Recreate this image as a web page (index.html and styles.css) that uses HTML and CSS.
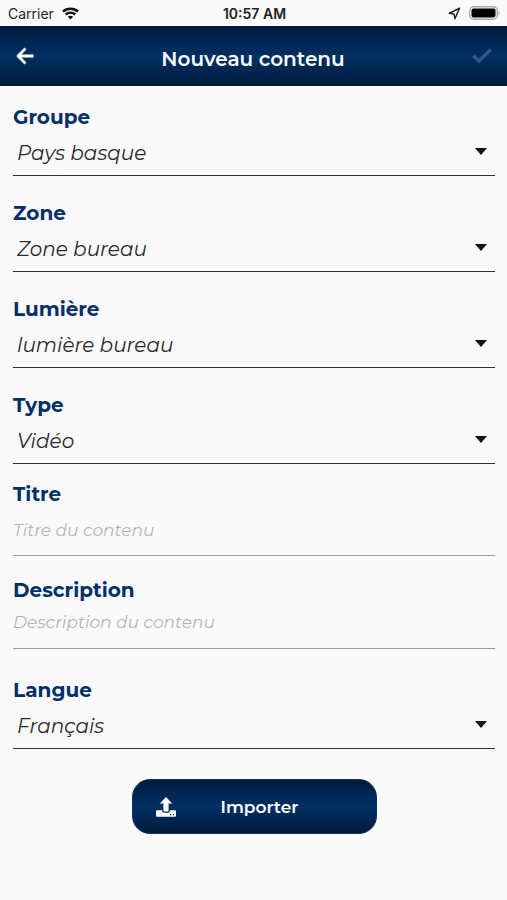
FILE: index.html
```html
<!DOCTYPE html>
<html lang="fr">
<head>
    <meta charset="UTF-8">
    <meta name="viewport" content="width=device-width, initial-scale=1.0">
    <title>Nouveau contenu</title>
    <link rel="stylesheet" href="styles.css">
</head>
<body>
    <div class="status-bar">
        <div class="status-left">
            <span>Carrier</span>
            <svg width="17" height="13" viewBox="0 0 17 13" fill="none" stroke="#111" stroke-width="2.4">
                <path d="M1 4.6C5 .7 12 .7 16 4.6"/>
                <path d="M3.7 7.5C6.4 5 10.6 5 13.3 7.5"/>
                <path d="M8.5 12.6L5.8 9.8C7.3 8.5 9.7 8.5 11.2 9.8Z" fill="#111" stroke="none"/>
            </svg>
        </div>
        <div class="status-time">10:57 AM</div>
        <div class="status-right">
            <svg width="13" height="13" viewBox="0 0 13 13" fill="none" stroke="#222" stroke-width="1.5" stroke-linejoin="round">
                <path d="M11.5 1.3L1.3 6.2L5.9 6.9L7 11.5Z"/>
            </svg>
            <svg width="32" height="14" viewBox="0 0 32 14">
                <rect x=".7" y=".7" width="27.6" height="12.6" rx="4" fill="none" stroke="#aaa" stroke-width="1.4"/>
                <rect x="2.5" y="2.5" width="24" height="9" rx="2" fill="#000"/>
                <path d="M29.5 4.8Q32 7 29.5 9.2Z" fill="#aaa"/>
            </svg>
        </div>
    </div>

    <header class="navbar">
        <button type="button" class="nav-button" aria-label="Retour">
            <svg width="18" height="18" viewBox="0 0 18 18" fill="none" stroke="#fff" stroke-width="2.8" stroke-linejoin="round">
                <path d="M9.5 1.5L2 9L9.5 16.5M2.5 9H17.5"/>
            </svg>
        </button>
        <h1>Nouveau contenu</h1>
        <button type="submit" form="contentForm" class="nav-button" aria-label="Valider" disabled>
            <svg width="20" height="16" viewBox="0 0 20 16" fill="none" stroke="#365780" stroke-width="3.4">
                <path d="M1.4 7.8L7 13.2L18.6 1.6"/>
            </svg>
        </button>
    </header>

    <form id="contentForm" class="form">
        <div class="field">
            <label for="groupe">Groupe</label>
            <select id="groupe">
                <option>Pays basque</option>
            </select>
        </div>
        <div class="field">
            <label for="zone">Zone</label>
            <select id="zone">
                <option>Zone bureau</option>
            </select>
        </div>
        <div class="field">
            <label for="lumiere">Lumière</label>
            <select id="lumiere">
                <option>lumière bureau</option>
            </select>
        </div>
        <div class="field">
            <label for="type">Type</label>
            <select id="type">
                <option>Vidéo</option>
            </select>
        </div>
        <div class="field field-titre">
            <label for="titre">Titre</label>
            <input type="text" id="titre" placeholder="Titre du contenu">
        </div>
        <div class="field field-description">
            <label for="description">Description</label>
            <input type="text" id="description" placeholder="Description du contenu">
        </div>
        <div class="field field-langue">
            <label for="langue">Langue</label>
            <select id="langue">
                <option>Français</option>
            </select>
        </div>

        <button type="button" class="import-button">
            <svg width="20" height="20" viewBox="0 0 20 20" fill="#fff">
                <path d="M10 0L16.2 6.6H12.6V13.2Q12.6 14.4 11.4 14.4H8.6Q7.4 14.4 7.4 13.2V6.6H3.8Z"/>
                <path fill-rule="evenodd" d="M1 13.2H6Q6.2 15.8 8.4 15.8H11.6Q13.8 15.8 14 13.2H19Q20 13.2 20 14.2V18.8Q20 19.8 19 19.8H1Q0 19.8 0 18.8V14.2Q0 13.2 1 13.2ZM14 17V18.2H15.2V17ZM16.8 17V18.2H18V17Z"/>
            </svg>
            <span>Importer</span>
        </button>
    </form>
</body>
</html>
```
FILE: styles.css
```css
* {
    box-sizing: border-box;
}

body {
    margin: 0;
    min-height: 100vh;
    background-color: #fafafc;
    font-family: 'Montserrat', 'Inter', sans-serif;
}

svg {
    display: block;
}

.status-bar {
    display: grid;
    grid-template-columns: 1fr auto 1fr;
    align-items: center;
    height: 26px;
    padding: 0 6px 0 8px;
    font-family: 'Inter', sans-serif;
    font-size: 14px;
    color: #222;
}

.status-left,
.status-right {
    display: flex;
    align-items: center;
    gap: 8px;
}

.status-right {
    justify-content: flex-end;
}

.status-time {
    font-weight: 600;
}

.navbar {
    display: flex;
    justify-content: space-between;
    align-items: center;
    height: 60px;
    padding: 0 15px 0 16px;
    background: linear-gradient(#001a3c, #003063 50%, #001a3c);
}

.navbar h1 {
    margin: 6px 0 0;
    font-size: 20px;
    line-height: 24px;
    font-weight: 600;
    color: white;
}

.nav-button {
    padding: 0;
    border: none;
    background: none;
    cursor: pointer;
}

.form {
    display: flex;
    flex-direction: column;
    padding: 19px 12px 24px 13px;
}

.field {
    display: flex;
    flex-direction: column;
    margin-bottom: 25px;
}

label {
    font-size: 20px;
    line-height: 24px;
    font-weight: 700;
    color: #003067;
}

select,
input {
    width: 100%;
    height: 47px;
    border: none;
    border-bottom: 1px solid #333;
    border-radius: 0;
    background: none;
    font-family: inherit;
    font-style: italic;
    outline: none;
}

select {
    appearance: none;
    padding: 2px 32px 0 4px;
    font-size: 20px;
    color: #2a2a2a;
}

/* drop-down arrow */
.field:has(select) {
    position: relative;
}

.field:has(select)::after {
    content: '';
    position: absolute;
    right: 8px;
    bottom: 21px;
    border: 6px solid transparent;
    border-top: 7px solid #111;
    border-bottom: none;
    pointer-events: none;
}

input {
    padding: 0;
    border-color: #999;
    font-size: 17px;
    color: #2a2a2a;
}

input::placeholder {
    color: #b4b4b4;
}

.field-titre {
    margin-top: -7px;
    margin-bottom: 22px;
}

.field-titre input {
    height: 50px;
    padding-bottom: 2px;
}

.field-description {
    margin-bottom: 29px;
}

.field-description input {
    padding-bottom: 6px;
}

.field-langue {
    margin-bottom: 30px;
}

.import-button {
    display: grid;
    grid-template-columns: 20px 1fr 8px;
    align-items: center;
    align-self: center;
    width: 245px;
    height: 55px;
    padding: 0 24px 0 23px;
    border: 1px solid #12305a;
    border-radius: 18px;
    background: linear-gradient(#001a3c, #003063 50%, #001a3c);
    font-family: inherit;
    font-size: 17px;
    font-weight: 600;
    color: white;
    cursor: pointer;
}
```
